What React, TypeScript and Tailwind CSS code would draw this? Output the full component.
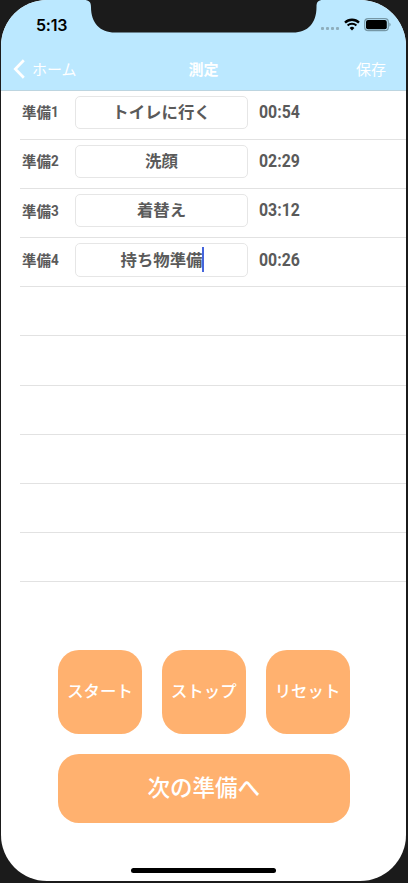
const steps = [
  { id: 1, label: '準備', name: 'トイレに行く', time: '00:54' },
  { id: 2, label: '準備', name: '洗顔', time: '02:29' },
  { id: 3, label: '準備', name: '着替え', time: '03:12' },
  { id: 4, label: '準備', name: '持ち物準備', time: '00:26', editing: true },
];

const emptyRows = [5, 6, 7, 8, 9, 10];

const actions = ['スタート', 'ストップ', 'リセット'];

function StatusBar() {
  return (
    <div className="flex h-12 items-start justify-between pl-[35px] pr-[15px]">
      <span className="mt-[14px] font-['Inter'] text-[16px] font-semibold leading-[22px] tracking-[-0.2px] text-black">
        5:13
      </span>
      <div className="mt-[17px] flex items-start">
        <div className="mr-[5px] mt-[10px] flex gap-[2px]">
          {[0, 1, 2, 3].map((dot) => (
            <span key={dot} className="h-[3px] w-[3px] rounded-[1px] bg-[#8eaebc]" />
          ))}
        </div>
        <svg width="16" height="13" viewBox="0 0 16 13" fill="none" className="mt-[1px]">
          <path d="M1 4.6a10 10 0 0 1 14 0" stroke="#000" strokeWidth="2.3" />
          <path d="M3.6 7.5a6.3 6.3 0 0 1 8.8 0" stroke="#000" strokeWidth="2.1" />
          <path d="M8 12.4 5.6 10a3.4 3.4 0 0 1 4.8 0Z" fill="#000" />
        </svg>
        <svg width="27" height="14" viewBox="0 0 27 14" className="ml-[4px] mt-px">
          <rect x="0.7" y="0.7" width="23.6" height="12" rx="3.4" fill="none" stroke="#7597a6" strokeWidth="1.2" />
          <rect x="2" y="2.1" width="20.8" height="9.2" rx="2" fill="#000" />
          <path d="M25.4 4.6c1.6.8 1.6 3.4 0 4.2Z" fill="#7597a6" />
        </svg>
      </div>
    </div>
  );
}

function Header() {
  return (
    <header className="h-[90.5px] shrink-0 border-b border-[#bdd5e0] bg-[#bbe8ff]">
      <StatusBar />
      <div className="grid h-[42px] grid-cols-3 items-center pl-[12px] pr-[20px] text-[15px] text-white">
        <button className="flex items-center gap-[7px]">
          <svg width="12" height="20" viewBox="0 0 12 20" fill="none">
            <path d="M10.8 1.3 2.3 10l8.5 8.7" stroke="#fff" strokeWidth="2.7" />
          </svg>
          <span>ホーム</span>
        </button>
        <h1 className="pl-[8px] text-center font-bold">測定</h1>
        <button className="text-right">保存</button>
      </div>
    </header>
  );
}

export default function App() {
  return (
    <div className="relative h-[883px] w-[408px] overflow-hidden bg-[#1b1b1b] pl-px font-['Noto_Sans_CJK_JP',sans-serif]">
      <main className="flex h-[881px] w-[405px] flex-col overflow-hidden rounded-[46px] bg-white">
        <Header />

        <ul className="pl-[19px]">
          {steps.map((step) => (
            <li
              key={step.id}
              className="flex h-[49.2px] items-start border-b border-[#e2e2e2] pt-[5px] font-bold text-[#5a5a5a]"
            >
              <span className="flex h-[33px] w-[55px] items-center pl-[2px] text-[14.5px]">
                {step.label}
                <span className="origin-left scale-x-90 pt-px font-['Roboto'] text-[15px]">{step.id}</span>
              </span>
              <div className="flex h-[33.5px] w-[173px] items-center justify-center rounded-[5px] border border-[#e6e6e6] pb-[2px] text-[16.4px]">
                {step.name}
                {step.editing && <span className="-mr-[2px] mt-[2px] h-[25px] w-[2px] bg-[#4565dc]" />}
              </div>
              <span className="ml-[11px] flex h-[33px] origin-left scale-x-[0.88] items-center pb-px font-['Roboto'] text-[18px]">
                {step.time}
              </span>
            </li>
          ))}
          {emptyRows.map((row) => (
            <li key={row} className="h-[49.2px] border-b border-[#e2e2e2]" />
          ))}
        </ul>

        <div className="mt-[67.5px] flex flex-col gap-5 px-[57px]">
          <div className="flex w-[291.5px] justify-between">
            {actions.map((action) => (
              <button
                key={action}
                className="h-[84.5px] w-[84px] whitespace-nowrap rounded-[21px] bg-[#ffb16f] pb-[3px] text-[16.4px] font-medium text-white"
              >
                {action}
              </button>
            ))}
          </div>
          <button className="h-[69px] w-[291.5px] rounded-[21px] bg-[#ffb16f] pb-[4px] text-[22.5px] font-medium text-white">
            次の準備へ
          </button>
        </div>

        <div className="mb-[8px] ml-[130px] mt-auto h-[5px] w-[145px] rounded-full bg-black" />
      </main>

      {/* Notch */}
      <svg className="absolute left-0 top-0" width="408" height="34" viewBox="0 0 408 34">
        <path
          d="M84 0C89 0 91 2 91 7C91 23 100 32.5 115 32.5H293C308 32.5 316.5 23 316.5 7C316.5 2 318 0 323 0Z"
          fill="#1b1b1b"
        />
      </svg>
    </div>
  );
}
